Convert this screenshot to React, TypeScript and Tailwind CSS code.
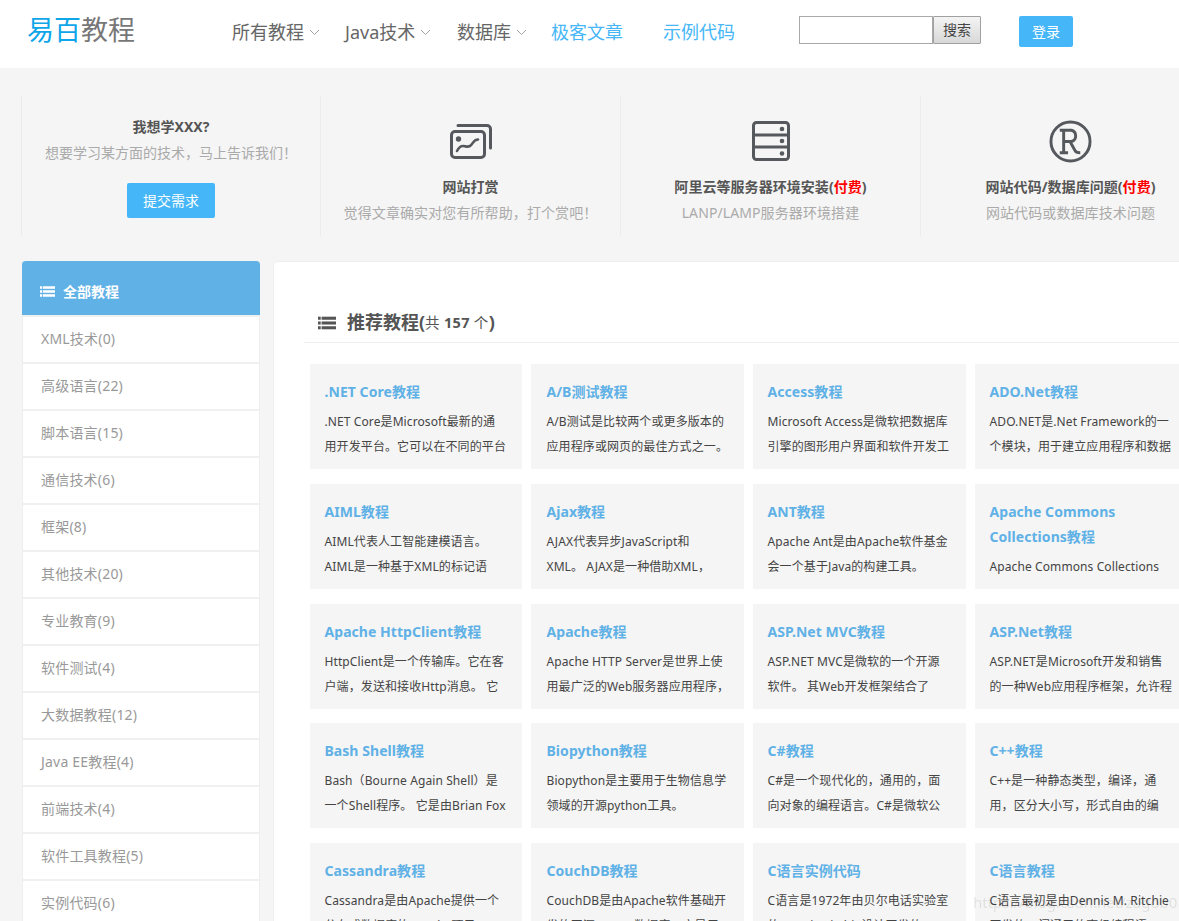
import React from "react";

const FONT = "[font-family:'Noto_Sans','Noto_Sans_CJK_SC',sans-serif]";

function Chevron() {
  return (
    <svg width="11" height="7" viewBox="0 0 11 7" className="ml-[5px] mt-[1px]" fill="none" stroke="#a3a3a3" strokeWidth="1">
      <path d="M1 1l4.500 4.500L10 1" />
    </svg>
  );
}

function ListIcon({ color, w, h }: { color: string; w: number; h: number }) {
  return (
    <svg width={w} height={h} viewBox="0 0 20 14" fill={color}>
      <rect x="0" y="0" width="3" height="3.400" />
      <rect x="4" y="0" width="16" height="3.400" />
      <rect x="0" y="5.300" width="3" height="3.400" />
      <rect x="4" y="5.300" width="16" height="3.400" />
      <rect x="0" y="10.600" width="3" height="3.400" />
      <rect x="4" y="10.600" width="16" height="3.400" />
    </svg>
  );
}

function PictureIcon() {
  return (
    <svg width="42" height="35" viewBox="0 0 42 35" fill="none" stroke="#55585c" strokeWidth="3">
      <rect x="1.500" y="7.500" width="33" height="26" rx="3.500" />
      <path d="M8 1.500h29a3.500 3.500 0 0 1 3.500 3.500v19" strokeLinecap="round" />
      <circle cx="8.500" cy="15" r="2.700" fill="#55585c" stroke="none" />
      <path d="M7 27c1.500-3 3-5 6-5s4 1.500 7 0 3-6.500 8-6.500" strokeLinecap="round" strokeWidth="2.600" />
    </svg>
  );
}

function ServerIcon() {
  return (
    <svg width="38" height="40" viewBox="0 0 38 40" fill="none" stroke="#55585c" strokeWidth="3">
      <rect x="1.500" y="1.500" width="35" height="37" rx="3" />
      <path d="M1.500 14h35M1.500 26h35" />
      <circle cx="30" cy="8" r="2.300" fill="#55585c" stroke="none" />
      <circle cx="30" cy="20" r="2.300" fill="#55585c" stroke="none" />
      <circle cx="30" cy="32.500" r="2.300" fill="#55585c" stroke="none" />
    </svg>
  );
}

function RegIcon() {
  return (
    <svg width="43" height="43" viewBox="0 0 44 44" fill="none" stroke="#55585c" strokeWidth="3">
      <circle cx="22" cy="22" r="20" />
      <path d="M11 10.500h12a6 6 0 0 1 0 11.500H15M15 10.500v23M11 33.500h8.500M21.500 22l5 9c.7 1.600 1.800 2.500 5.500 2.500" strokeWidth="3" />
    </svg>
  );
}

const navDrop = [["所有教程", "w-[113px]"], ["Java技术", "w-[112px]"], ["数据库", "w-[94px]"]];

const sidebar = [
  "XML技术(0)", "高级语言(22)", "脚本语言(15)", "通信技术(6)", "框架(8)", "其他技术(20)",
  "专业教育(9)", "软件测试(4)", "大数据教程(12)", "Java EE教程(4)", "前端技术(4)", "软件工具教程(5)", "实例代码(6)",
];

const cards: string[][] = [
  [".NET Core教程", ".NET Core是Microsoft最新的通", "用开发平台。它可以在不同的平台"],
  ["A/B测试教程", "A/B测试是比较两个或更多版本的", "应用程序或网页的最佳方式之一。"],
  ["Access教程", "Microsoft Access是微软把数据库", "引擎的图形用户界面和软件开发工"],
  ["ADO.Net教程", "ADO.NET是.Net Framework的一", "个模块，用于建立应用程序和数据"],
  ["AIML教程", "AIML代表人工智能建模语言。", "AIML是一种基于XML的标记语"],
  ["Ajax教程", "AJAX代表异步JavaScript和", "XML。 AJAX是一种借助XML，"],
  ["ANT教程", "Apache Ant是由Apache软件基金", "会一个基于Java的构建工具。"],
  ["Apache Commons Collections教程", "Apache Commons Collections", ""],
  ["Apache HttpClient教程", "HttpClient是一个传输库。它在客", "户端，发送和接收Http消息。 它"],
  ["Apache教程", "Apache HTTP Server是世界上使", "用最广泛的Web服务器应用程序，"],
  ["ASP.Net MVC教程", "ASP.NET MVC是微软的一个开源", "软件。 其Web开发框架结合了"],
  ["ASP.Net教程", "ASP.NET是Microsoft开发和销售", "的一种Web应用程序框架，允许程"],
  ["Bash Shell教程", "Bash（Bourne Again Shell）是", "一个Shell程序。 它是由Brian Fox"],
  ["Biopython教程", "Biopython是主要用于生物信息学", "领域的开源python工具。"],
  ["C#教程", "C#是一个现代化的，通用的，面", "向对象的编程语言。C#是微软公"],
  ["C++教程", "C++是一种静态类型，编译，通", "用，区分大小写，形式自由的编"],
  ["Cassandra教程", "Cassandra是由Apache提供一个", "分布式数据库的Apache项目，"],
  ["CouchDB教程", "CouchDB是由Apache软件基础开", "发的开源NoSQL数据库，它是用"],
  ["C语言实例代码", "C语言是1972年由贝尔电话实验室", "的Dennis Ritchie设计开发的"],
  ["C语言教程", "C语言最初是由Dennis M. Ritchie", "开发的一门通用的高级编程语"],
];

function Feature({ icon, title, sub }: { icon: React.ReactNode; title: React.ReactNode; sub: string }) {
  return (
    <div className="w-[300px] shrink-0 border-l border-[#ececec] flex flex-col items-center">
      <div className="h-[44px] mt-[23px] flex items-center justify-center">{icon}</div>
      <div className="mt-[14px] text-[14px] leading-[20px] font-bold text-[#555] tracking-[0.05px] whitespace-nowrap">{title}</div>
      <div className="mt-[6px] text-[14px] leading-[20px] text-[#aaa] tracking-[0.1px] whitespace-nowrap">{sub}</div>
    </div>
  );
}

export default function App() {
  return (
    <div className={`${FONT} relative w-[1179px] h-[921px] overflow-hidden bg-[#f5f5f5]`}>
      <header className="h-[68px] bg-white flex items-start">
        <div className="ml-[27px] mt-[11px] w-[205px] text-[27px] leading-[38px] text-[#777] whitespace-nowrap">
          <span className="text-[#0ea5e9]">易百</span>教程
        </div>
        <nav className="flex items-center mt-[17px] h-[30px] text-[18px] text-[#666]">
          {navDrop.map(([t, w]) => (
            <div key={t} className={`${w} flex items-center whitespace-nowrap`}>
              {t}
              <Chevron />
            </div>
          ))}
          <div className="w-[112px] text-[#45b6f7] whitespace-nowrap">极客文章</div>
          <div className="w-[136px] text-[#45b6f7] whitespace-nowrap">示例代码</div>
        </nav>
        <form className="flex mt-[16px]">
          <input className="w-[134px] h-[28px] bg-white border border-[#a9a9a9] outline-none" />
          <button type="button" className="w-[48px] h-[28px] text-[14px] leading-[24px] text-[#444] border border-[#a0a0a0] rounded-[1px] bg-gradient-to-b from-[#f4f4f4] to-[#d8d8d8]">
            搜索
          </button>
        </form>
        <button type="button" className="ml-[38px] mt-[16px] w-[54px] h-[31px] rounded-[2px] bg-[#45b6f7] text-white text-[14px]">
          登录
        </button>
      </header>

      <section className="flex ml-[21px] mt-[28px] h-[140px]">
        <div className="w-[299px] shrink-0 border-l border-[#ececec] flex flex-col items-center">
          <div className="mt-[21px] text-[14px] leading-[20px] font-bold text-[#555]">我想学XXX?</div>
          <div className="mt-[6px] text-[14px] leading-[20px] text-[#aaa] whitespace-nowrap">想要学习某方面的技术，马上告诉我们！</div>
          <button type="button" className="mt-[20px] w-[88px] h-[35px] rounded-[2px] bg-[#45b6f7] text-white text-[14px]">提交需求</button>
        </div>
        <Feature icon={<PictureIcon />} title="网站打赏" sub="觉得文章确实对您有所帮助，打个赏吧！" />
        <Feature
          icon={<ServerIcon />}
          title={<>阿里云等服务器环境安装(<span className="text-[#ff0000]">付费</span>)</>}
          sub="LANP/LAMP服务器环境搭建"
        />
        <Feature
          icon={<RegIcon />}
          title={<>网站代码/数据库问题(<span className="text-[#ff0000]">付费</span>)</>}
          sub="网站代码或数据库技术问题"
        />
      </section>

      <div className="flex ml-[22px] mt-[25px] gap-[13px] items-start">
        <aside className="w-[238px] shrink-0 border-x border-[#eeeeee] bg-[#f0f0f0] flex flex-col gap-[2px]">
          <div className="h-[54px] -mx-px rounded-t-[4px] bg-[#5fb1e6] text-white text-[14px] font-bold flex items-center pl-[18px] pt-[6px]">
            <ListIcon color="#fff" w={15} h={11} />
            <span className="ml-[8px]">全部教程</span>
          </div>
          {sidebar.map((s) => (
            <div key={s} className="h-[45px] bg-white flex items-center pl-[18px] pb-[2px] text-[14px] text-[#999] tracking-[0.2px]">
              {s}
            </div>
          ))}
        </aside>

        <main className="w-[920px] shrink-0 h-[700px] rounded-[4px] bg-white border border-[#eeeeee] pl-[30px] pt-[45px]">
          <div className="h-[36px] border-b border-[#eeeeee] flex items-center pl-[14px] pb-[4px] font-bold text-[#555]">
            <ListIcon color="#555" w={18} h={14} />
            <span className="ml-[11px] text-[18px]">推荐教程(</span>
            <span className="text-[14.500px] tracking-[0.3px]">
              <span className="font-normal">共</span> 157 <span className="font-normal">个</span>
            </span>
            <span className="text-[18px]">)</span>
          </div>
          <div className="ml-[6px] mt-[21px] grid grid-cols-[212px_213px_213px_212px] gap-x-[9px] gap-y-[14.750px]">
            {cards.map(([t, a, b], i) => (
              <div key={t} className={`h-[105px] bg-[#f5f5f5] pt-[15px] overflow-hidden ${i % 4 === 1 ? "pl-[15.500px]" : "pl-[14.500px]"}`}>
                <div className="text-[14px] leading-[25px] font-bold text-[#5fb1e6] tracking-[0.05px] pr-[15px]">{t}</div>
                <div className="mt-[5px] text-[12px] leading-[25px] text-[#444] tracking-[0.1px] whitespace-nowrap">
                  <div>{a}</div>
                  {b && <div>{b}</div>}
                </div>
              </div>
            ))}
          </div>
        </main>
      </div>

      <div className="absolute left-[973px] top-[892px] text-[15px] leading-[20px] text-[#00000016] blur-[0.4px] whitespace-nowrap">
        https://blog.csdn.net/zagob0
      </div>
    </div>
  );
}
